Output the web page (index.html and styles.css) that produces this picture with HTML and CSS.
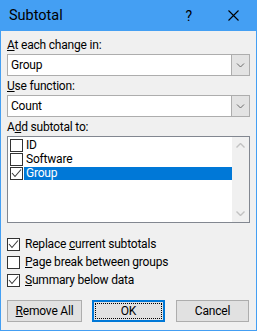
FILE: index.html
```html
<!DOCTYPE html>
<html lang="en">

<head>
    <meta charset="UTF-8">
    <meta name="viewport" content="width=device-width, initial-scale=1.0">
    <link rel="stylesheet" href="styles.css">
    <title>Subtotal</title>
</head>

<body>
    <div class="dialog">
        <div class="titlebar">
            <span class="title">Subtotal</span>
            <span class="help">?</span>
            <span class="close">
                <svg width="11" height="11" viewBox="0 0 11 11">
                    <path d="M0.5 0.5 L10.5 10.5 M10.5 0.5 L0.5 10.5" stroke="#000" stroke-width="1.1" fill="none" />
                </svg>
            </span>
        </div>
        <div class="content">
            <div class="field-label"><u>A</u>t each change in:</div>
            <div class="combo">
                <span class="combo-value">Group</span>
                <span class="combo-btn">
                    <svg width="9" height="5" viewBox="0 0 9 5">
                        <path d="M1 0.5 L4.5 4 L8 0.5" stroke="#6a6a6a" fill="none" />
                    </svg>
                </span>
            </div>
            <div class="field-label"><u>U</u>se function:</div>
            <div class="combo">
                <span class="combo-value">Count</span>
                <span class="combo-btn">
                    <svg width="9" height="5" viewBox="0 0 9 5">
                        <path d="M1 0.5 L4.5 4 L8 0.5" stroke="#6a6a6a" fill="none" />
                    </svg>
                </span>
            </div>
            <div class="field-label">A<u>d</u>d subtotal to:</div>
            <div class="listbox">
                <div class="list-items">
                    <div class="list-row">
                        <span class="box"></span>
                        <span class="item-text">ID</span>
                    </div>
                    <div class="list-row">
                        <span class="box"></span>
                        <span class="item-text">Software</span>
                    </div>
                    <div class="list-row">
                        <span class="box">
                            <svg width="11" height="11" viewBox="0 0 11 11">
                                <path d="M1 5 L4 8.5 L10 1.5" stroke="#3a3a3a" stroke-width="1.1" fill="none" />
                            </svg>
                        </span>
                        <span class="item-text selected">Group</span>
                    </div>
                </div>
                <div class="scrollbar">
                    <svg width="9" height="5" viewBox="0 0 9 5">
                        <path d="M0.5 4.5 L4.5 0.5 L8.5 4.5" stroke="#c2c2c2" stroke-width="1.4" fill="none" />
                    </svg>
                    <svg width="9" height="5" viewBox="0 0 9 5">
                        <path d="M0.5 0.5 L4.5 4.5 L8.5 0.5" stroke="#c2c2c2" stroke-width="1.4" fill="none" />
                    </svg>
                </div>
            </div>
            <div class="options">
                <div class="option">
                    <span class="box">
                        <svg width="11" height="11" viewBox="0 0 11 11">
                            <path d="M1 5 L4 8.5 L10 1.5" stroke="#3a3a3a" stroke-width="1.1" fill="none" />
                        </svg>
                    </span>
                    <span class="option-text">Replace <u>c</u>urrent subtotals</span>
                </div>
                <div class="option">
                    <span class="box"></span>
                    <span class="option-text"><u>P</u>age break between groups</span>
                </div>
                <div class="option">
                    <span class="box">
                        <svg width="11" height="11" viewBox="0 0 11 11">
                            <path d="M1 5 L4 8.5 L10 1.5" stroke="#3a3a3a" stroke-width="1.1" fill="none" />
                        </svg>
                    </span>
                    <span class="option-text"><u>S</u>ummary below data</span>
                </div>
            </div>
            <div class="buttons">
                <button type="button" class="btn btn-remove"><u>R</u>emove All</button>
                <button type="button" class="btn btn-ok"><span class="focus-ring">OK</span></button>
                <button type="button" class="btn btn-cancel">Cancel</button>
            </div>
        </div>
    </div>
</body>

</html>
```

FILE: styles.css
```css
body {
    margin: 0;
    font-family: Roboto, "Liberation Sans", sans-serif;
    font-size: 12px;
    letter-spacing: -0.2px;
    color: #000;
}

.dialog {
    width: 257px;
    height: 331px;
    box-sizing: border-box;
    border: 1px solid #449ff3;
    border-top: none;
    background-color: #f0f0f0;
    display: flex;
    flex-direction: column;
}

.titlebar {
    height: 31px;
    margin: 0 -1px;
    background-color: #449ff3;
    display: flex;
    align-items: center;
}

.title {
    margin-left: 9px;
    font-size: 14.5px;
    letter-spacing: 0;
    flex: 1;
}

.help {
    font-size: 14px;
    margin-right: 36px;
}

.close {
    display: flex;
    margin-right: 18px;
}

.content {
    padding: 6px 6px 0 6px;
    display: flex;
    flex-direction: column;
}

.field-label {
    height: 17px;
    line-height: 17px;
}

.field-label + .field-label,
.combo + .field-label {
    margin-top: 2px;
}

.combo {
    height: 22px;
    box-sizing: border-box;
    border: 1px solid #adadad;
    background-color: #fff;
    display: flex;
}

.combo-value {
    flex: 1;
    padding-left: 3px;
    line-height: 20px;
}

.combo-btn {
    width: 17px;
    background-color: #e3e3e3;
    border-left: 1px solid #adadad;
    display: flex;
    align-items: center;
    justify-content: center;
}

.listbox {
    height: 87px;
    box-sizing: border-box;
    border: 1px solid #828790;
    background-color: #fff;
    display: flex;
}

.list-items {
    flex: 1;
    padding-top: 1px;
}

.list-row {
    height: 14px;
    display: flex;
}

.box {
    width: 13px;
    height: 13px;
    box-sizing: border-box;
    border: 1px solid #333;
    background-color: #fff;
    display: flex;
    align-items: center;
    justify-content: center;
    flex-shrink: 0;
}

.list-row .box {
    margin: 1px 0 0 2px;
}

.item-text {
    flex: 1;
    margin-top: 1px;
    margin-left: 1px;
    padding: 0 2px;
    height: 13px;
    line-height: 13px;
}

.item-text.selected {
    background-color: #0078d7;
    color: #fff;
}

.scrollbar {
    width: 17px;
    background-color: #f0f0f0;
    display: flex;
    flex-direction: column;
    align-items: center;
    justify-content: space-between;
    padding: 6px 0 6px 0;
}

.options {
    margin-top: 13px;
}

.option {
    height: 18px;
    display: flex;
    align-items: flex-start;
}

.option .box {
    margin-top: 2px;
}

.option-text {
    margin-left: 5px;
    line-height: 17px;
}

.buttons {
    display: flex;
    margin-top: 10px;
}

.btn {
    height: 22px;
    box-sizing: border-box;
    border: 1px solid #adadad;
    background-color: #e1e1e1;
    font-family: inherit;
    font-size: 12px;
    letter-spacing: -0.2px;
    padding: 0;
    color: #000;
}

.btn-remove {
    width: 75px;
}

.btn-ok {
    width: 73px;
    margin-left: 10px;
    border: 2px solid #0078d7;
    display: flex;
    padding: 1px;
}

.focus-ring {
    flex: 1;
    border: 1px dotted #000;
    line-height: 14px;
}

.btn-cancel {
    width: 73px;
    margin-left: 11px;
}
```
